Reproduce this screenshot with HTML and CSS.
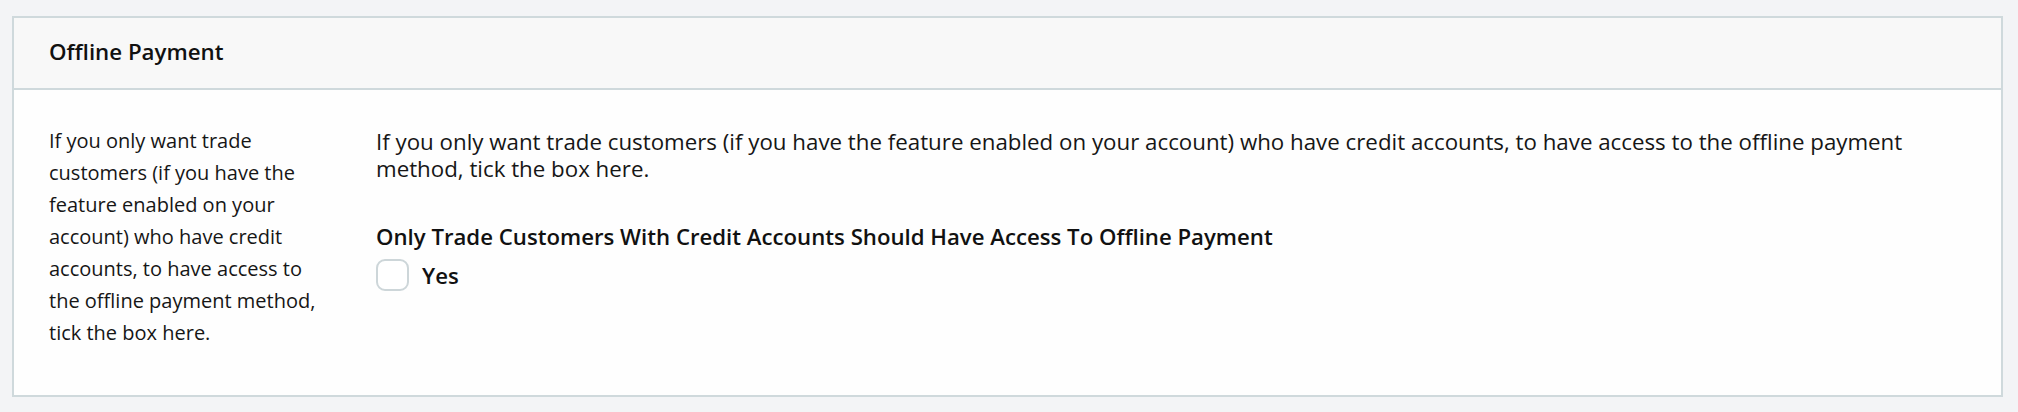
FILE: index.html
```html
<!DOCTYPE html>
<html lang="en">
<head>
<meta charset="utf-8">
<title>Offline Payment</title>
<link rel="stylesheet" href="styles.css">
</head>
<body>
<div class="page">
  <section class="card">
    <header class="card-header">
      <h2 class="card-title">Offline Payment</h2>
    </header>
    <div class="card-body">
      <p class="help">If you only want trade customers (if you have the feature enabled on your account) who have credit accounts, to have access to the offline payment method, tick the box here.</p>
      <div class="field">
        <p class="desc">If you only want trade customers (if you have the feature enabled on your account) who have credit accounts, to have access to the offline payment method, tick the box here.</p>
        <div class="label">Only Trade Customers With Credit Accounts Should Have Access To Offline Payment</div>
        <label class="check">
          <span class="box"></span>
          <span class="check-text">Yes</span>
        </label>
      </div>
    </div>
  </section>
</div>
</body>
</html>
```
FILE: styles.css
```css
* { box-sizing: border-box; }
html, body { margin: 0; padding: 0; }
body {
  background: #f3f4f6;
  font-family: "Open Sans", "Liberation Sans", sans-serif;
  color: #161616;
}
.page {
  padding: 16px 15px 16px 12px;
}
.card {
  border: 2px solid #cfd9dc;
  background: #fefefe;
}
.card-header {
  background: #f8f8f8;
  border-bottom: 2px solid #cfd9dc;
  height: 72px;
  display: flex;
  align-items: center;
  padding: 0 35px 4px;
}
.card-title {
  margin: 0;
  font-size: 22.3px;
  font-weight: 600;
  color: #111;
}
.card-body {
  display: grid;
  grid-template-columns: 276px 1fr;
  column-gap: 51px;
  padding: 35px 36px 40px 35px;
  min-height: 305px;
}
.help {
  margin: 0;
  font-size: 20px;
  line-height: 32px;
  color: #161616;
}
.field {
  padding-top: 3px;
}
.desc {
  margin: 0;
  font-size: 22.3px;
  line-height: 27px;
  color: #161616;
}
.label {
  margin-top: 41px;
  font-size: 22.2px;
  font-weight: 600;
  line-height: 27px;
  color: #111;
}
.check {
  display: flex;
  align-items: center;
  gap: 13px;
  margin-top: 9px;
}
.box {
  width: 33px;
  height: 32px;
  border: 2px solid #cdd6d9;
  border-radius: 9px;
  background: #fff;
}
.check-text {
  font-size: 22.2px;
  font-weight: 600;
  color: #111;
}
```
